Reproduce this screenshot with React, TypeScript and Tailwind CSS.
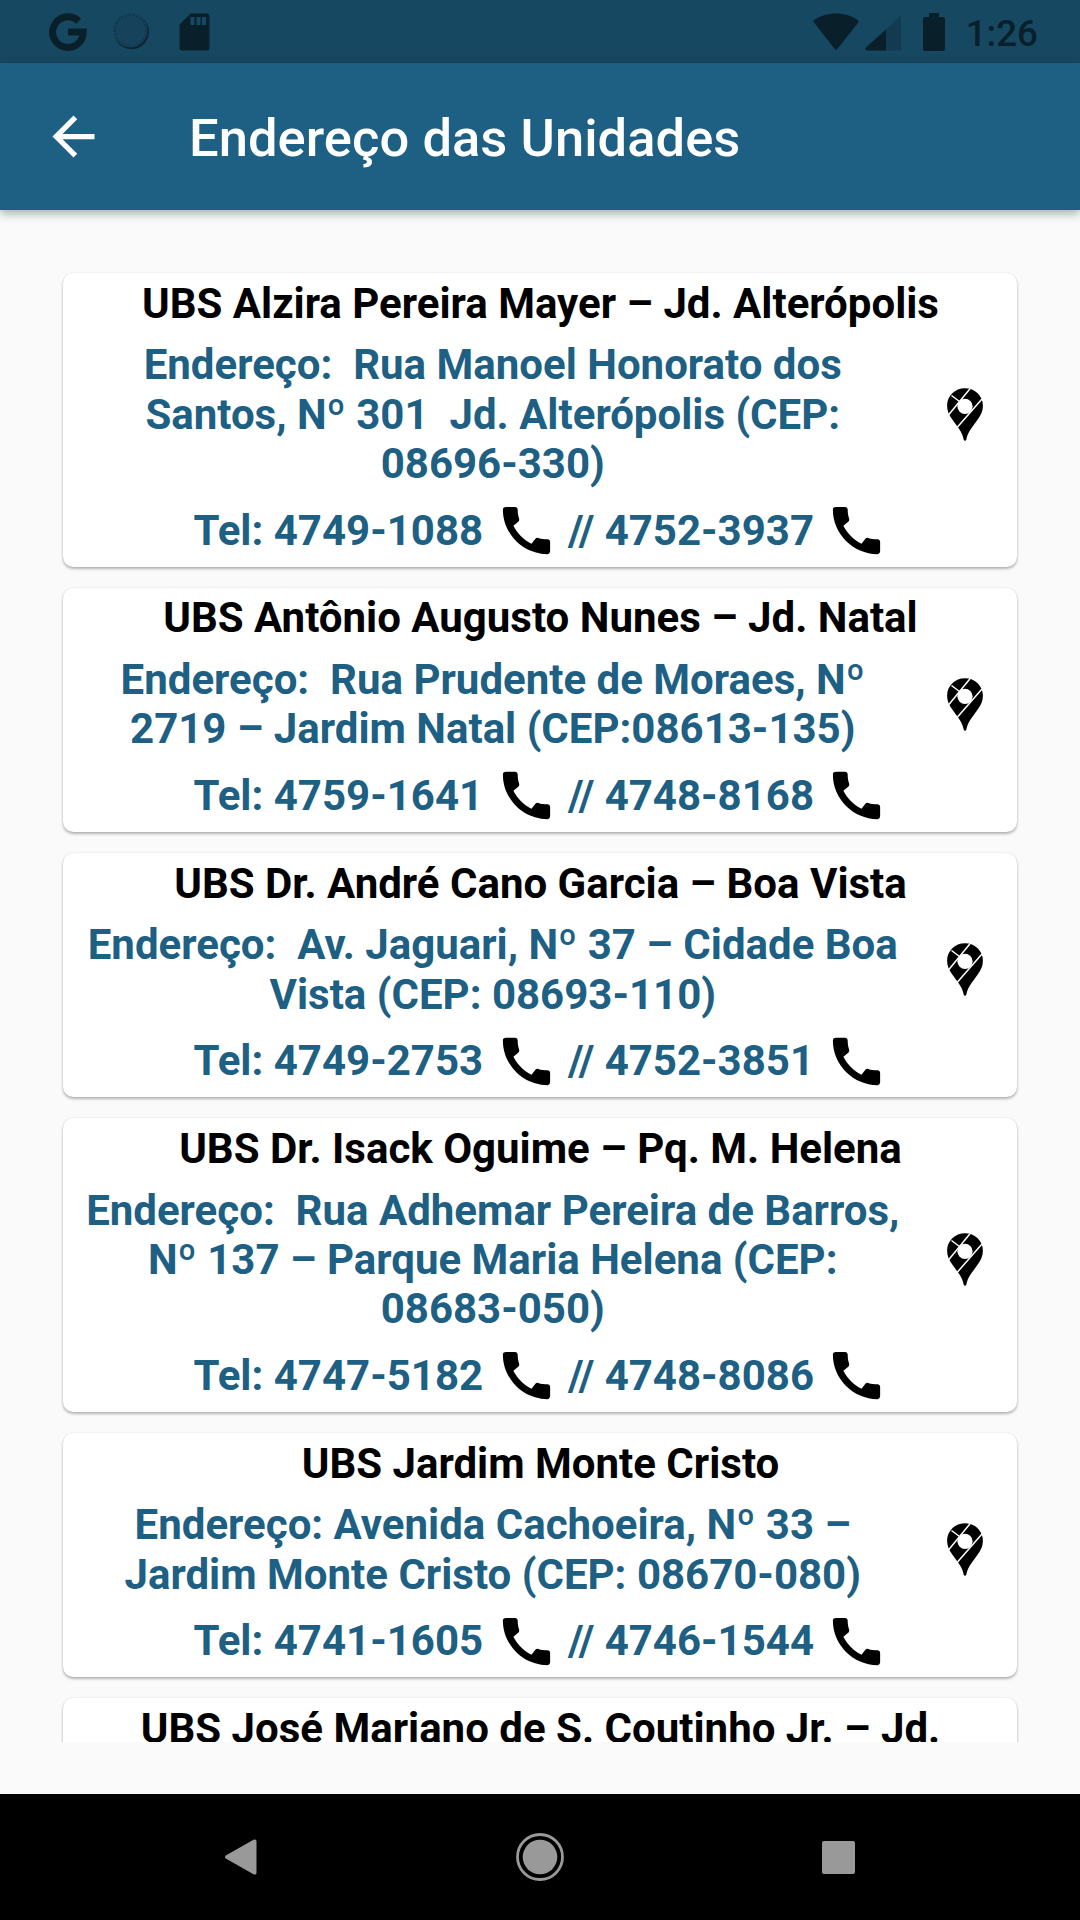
import React from 'react';

type Unit = {
  name: string;
  address: string[];
  phones: string[];
};

const units: Unit[] = [
  {
    name: 'UBS Alzira Pereira Mayer – Jd. Alterópolis',
    address: ['Endereço:  Rua Manoel Honorato dos', 'Santos, Nº 301  Jd. Alterópolis (CEP:', '08696-330)'],
    phones: ['4749-1088', '4752-3937'],
  },
  {
    name: 'UBS Antônio Augusto Nunes – Jd. Natal',
    address: ['Endereço:  Rua Prudente de Moraes, Nº', '2719 – Jardim Natal (CEP:08613-135)'],
    phones: ['4759-1641', '4748-8168'],
  },
  {
    name: 'UBS Dr. André Cano Garcia – Boa Vista',
    address: ['Endereço:  Av. Jaguari, Nº 37 – Cidade Boa', 'Vista (CEP: 08693-110)'],
    phones: ['4749-2753', '4752-3851'],
  },
  {
    name: 'UBS Dr. Isack Oguime – Pq. M. Helena',
    address: ['Endereço:  Rua Adhemar Pereira de Barros,', 'Nº 137 – Parque Maria Helena (CEP:', '08683-050)'],
    phones: ['4747-5182', '4748-8086'],
  },
  {
    name: 'UBS Jardim Monte Cristo',
    address: ['Endereço: Avenida Cachoeira, Nº 33 –', 'Jardim Monte Cristo (CEP: 08670-080)'],
    phones: ['4741-1605', '4746-1544'],
  },
  {
    name: 'UBS José Mariano de S. Coutinho Jr. – Jd.',
    address: [],
    phones: [],
  },
];

function PhoneIcon() {
  return (
    <svg viewBox="0 0 24 24" className="w-[63px] h-[63px] ml-px flex-shrink-0" fill="#000">
      <path d="M20.01 15.38c-1.23 0-2.42-.2-3.53-.56-.35-.12-.74-.03-1.01.24l-1.57 1.97c-2.83-1.35-5.48-3.9-6.89-6.83l1.95-1.66c.27-.28.35-.67.24-1.02-.37-1.11-.56-2.3-.56-3.53 0-.54-.45-.99-.99-.99H4.19C3.65 3 3 3.24 3 3.99 3 13.28 10.73 21 20.01 21c.71 0 .99-.63.99-1.18v-3.45c0-.54-.45-.99-.99-.99z" />
    </svg>
  );
}

function PinIcon() {
  return (
    <svg viewBox="0 0 36 53" className="w-9 h-[53px]">
      <path d="M18 .3C8 .3 .1 8 .1 17.7c0 5.3 2 9.3 5.2 13.7l6.5 9.2c2.6 3.6 4.2 7.5 5 11.3.3 1.1 2.1 1.1 2.4 0 .8-3.8 2.4-7.7 5-11.3l6.5-9.2c3.2-4.4 5.2-8.4 5.2-13.7C35.9 8 28 .3 18 .3z" fill="#000" />
      <path d="M4.5 7.5L12.5 13.5M23 .8L1.7 26.7M35 11L10.5 39" stroke="#fff" strokeWidth="1.5" fill="none" />
      <circle cx="18" cy="18.3" r="7.6" fill="#fff" />
    </svg>
  );
}

function StatusBar() {
  return (
    <div className="h-[63px] bg-[#174862] flex items-center justify-between pl-[49px] pr-[42px] flex-shrink-0">
      <div className="flex items-center gap-[26px]">
        <svg viewBox="0 0 38 38" className="w-[38px] h-[38px]" fill="none" stroke="#09202b" strokeWidth="7">
          <path d="M29.6 8.2A15.3 15.3 0 1 0 34.2 19H19" />
        </svg>
        <svg viewBox="0 0 38 38" className="w-[38px] h-[38px]">
          <circle cx="18.500" cy="18.800" r="17.500" fill="#0c2837" />
          <circle cx="17.300" cy="17.300" r="17" fill="#16435b" />
          <circle cx="17.500" cy="17.500" r="15.800" fill="none" stroke="#103a4f" strokeWidth="2.500" strokeDasharray="2 2" />
        </svg>
        <svg viewBox="0 0 31 38" className="w-[31px] h-[38px] ml-[2px]">
          <path d="M11.500.5H28a2.500 2.500 0 0 1 2.500 2.500v32a2.500 2.500 0 0 1-2.500 2.500H3A2.500 2.500 0 0 1 .5 35V11.500z" fill="#09202b" />
          <path d="M11.500 4h4v8h-4zM17.500 4h4v8h-4zM23 4h4v8h-4z" fill="#174862" />
        </svg>
      </div>
      <div className="flex items-center">
        <svg viewBox="0 0 46 38" className="w-[46px] h-[38px] mr-[6px] -ml-px" fill="#09202b">
          <path d="M1 9.500C-.1 8.700 0 8 1 7.200 13-1.600 33-1.600 45 7.200c1 .8 1.100 1.500.2 2.500L24.500 35.700c-1 1.200-2 1.200-3 0z" />
        </svg>
        <svg viewBox="0 0 36 38" className="w-9 h-[38px] mr-[22px]">
          <path d="M36 2.500V37.500H3c-3 0-3.500-1.500-1.700-3.300z" fill="#123a50" />
          <path d="M21 16.500v21H3c-3 0-3.500-1.500-1.700-3.300z" fill="#09202b" />
        </svg>
        <svg viewBox="0 0 22 38" className="w-[22px] h-[38px] mr-[21px]" fill="#09202b">
          <path d="M6 0h10v4h4a2 2 0 0 1 2 2v30a2 2 0 0 1-2 2H2a2 2 0 0 1-2-2V6a2 2 0 0 1 2-2h4z" />
        </svg>
        <span className="text-[36.75px] leading-[43px] pt-[3px] font-medium text-[#09202b]">1:26</span>
      </div>
    </div>
  );
}

function AppBar() {
  return (
    <div className="h-[147px] bg-[#1d6083] flex items-center flex-shrink-0 pl-[42px] shadow-[0_3px_10px_rgba(0,0,0,0.35)] relative z-10">
      <svg viewBox="0 0 24 24" className="w-[63px] h-[63px] mr-[84px]" fill="#fff">
        <path d="M20 11H7.830l5.590-5.590L12 4l-8 8 8 8 1.410-1.410L7.830 13H20v-2z" />
      </svg>
      <h1 className="text-[52.5px] leading-[62px] pt-[2px] tracking-[0.04px] font-medium text-white whitespace-pre">Endereço das Unidades</h1>
    </div>
  );
}

function UnitCard({ unit }: { unit: Unit }) {
  return (
    <div className="bg-white rounded-[10.5px] pt-[5.75px] pb-[4.75px] shadow-[0_2px_3px_rgba(0,0,0,0.28),0_0_2px_rgba(0,0,0,0.1)] flex-shrink-0">
      <h2 className="text-[42px] leading-[49.22px] font-bold text-black text-center whitespace-pre pl-px">{unit.name}</h2>
      {unit.address.length > 0 && (
        <>
          <div className="flex items-center pl-[10.5px] mt-[12.3px]">
            <div className="flex-1 text-[42px] leading-[49.4px] font-bold text-[#1d6083] text-center whitespace-pre">
              {unit.address.map((line) => (
                <div key={line}>{line}</div>
              ))}
            </div>
            <button className="w-[105px] flex justify-center">
              <PinIcon />
            </button>
          </div>
          <div className="flex items-center justify-center mt-[10.5px] pl-[2px] text-[42px] leading-[49.5px] font-bold text-[#1d6083] whitespace-pre">
            <span>Tel: {unit.phones[0]} </span>
            <PhoneIcon />
            <span> // {unit.phones[1]} </span>
            <PhoneIcon />
          </div>
        </>
      )}
    </div>
  );
}

export default function App() {
  return (
    <div className="w-[1080px] h-[1920px] bg-[#fafafa] flex flex-col overflow-hidden font-['Roboto',sans-serif]">
      <StatusBar />
      <AppBar />
      <div className="h-[1532px] overflow-hidden flex flex-col gap-[21px] px-[63px] pt-[63px] flex-shrink-0">
        {units.map((unit) => (
          <UnitCard key={unit.name} unit={unit} />
        ))}
      </div>
      {/* Android navigation bar */}
      <div className="h-[126px] mt-auto bg-black flex items-center justify-between px-[225px] flex-shrink-0">
        <svg viewBox="0 0 32 36" className="w-8 h-9" fill="#999">
          <path d="M1.200 16.200L28.500.8C30 0 31.500.5 31.500 2.500v31c0 2-1.500 2.500-3 1.700L1.200 19.800c-1.600-1-1.600-2.600 0-3.600z" />
        </svg>
        <svg viewBox="0 0 48 48" className="w-12 h-12 mb-px" fill="none">
          <circle cx="24" cy="24" r="22.500" stroke="#999" strokeWidth="2.800" />
          <circle cx="24" cy="24" r="17.300" fill="#999" />
        </svg>
        <div className="w-[33px] h-[33px] rounded-[2px] bg-[#999]" />
      </div>
    </div>
  );
}
